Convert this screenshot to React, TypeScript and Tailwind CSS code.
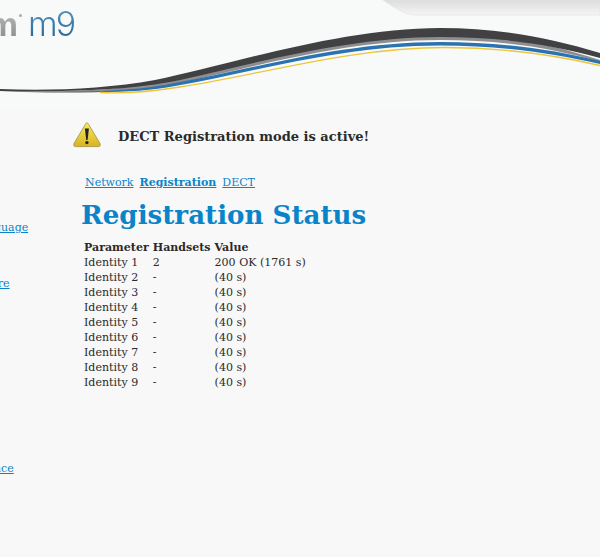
const rows = [
  { name: 'Identity 1', handsets: '2', value: '200 OK (1761 s)' },
  { name: 'Identity 2', handsets: '-', value: '(40 s)' },
  { name: 'Identity 3', handsets: '-', value: '(40 s)' },
  { name: 'Identity 4', handsets: '-', value: '(40 s)' },
  { name: 'Identity 5', handsets: '-', value: '(40 s)' },
  { name: 'Identity 6', handsets: '-', value: '(40 s)' },
  { name: 'Identity 7', handsets: '-', value: '(40 s)' },
  { name: 'Identity 8', handsets: '-', value: '(40 s)' },
  { name: 'Identity 9', handsets: '-', value: '(40 s)' },
]

function Wave() {
  return (
    <svg width="600" height="110" viewBox="0 0 600 110" className="block">
      <defs>
        <linearGradient id="tab" x1="0" y1="0" x2="0" y2="1">
          <stop offset="0" stopColor="#dcdcdc" />
          <stop offset="1" stopColor="#f5f5f5" />
        </linearGradient>
      </defs>
      <path d="M383 0 C395 8 405 15 416 15 L600 15 L600 0 Z" fill="url(#tab)" stroke="#e2e2e2" strokeWidth="0.7" />
      {/* gray shadow */}
      <path d="M0 90 C60 93 120 91 170 80 C240 66 340 33 440 33 C500 33 550 44 600 60 L600 62 C550 47 500 40 440 40 C340 40 240 71 170 85 C120 94 60 94 0 91 Z" fill="#8e8e90" />
      {/* dark band */}
      <path d="M0 89 C50 91 105 89 155 80 C225 66 340 28 440 28 C500 28 550 38 600 53 L600 58 C550 44 500 37 440 37 C340 37 235 69 170 82 C120 91 60 92 0 91 Z" fill="#414143" />
      {/* blue */}
      <path d="M60 91.5 C110 92 145 89 175 83 C250 70 340 42 440 42 C500 42 550 49 600 61 L600 64 C550 53 500 45.5 440 45.5 C340 45.5 250 73 175 86 C145 92 110 93 60 91.5 Z" fill="#2a72b0" />
      {/* yellow */}
      <path d="M100 92.5 C130 94 155 91 180 87 C260 75 350 47.5 445 47.5 C500 47.5 550 54 600 65.5" fill="none" stroke="#ecc638" strokeWidth="1.3" />
    </svg>
  )
}

function WarningIcon() {
  return (
    <svg width="28" height="26" viewBox="0 0 28 26" className="block">
      <defs>
        <linearGradient id="warn" x1="0" y1="0" x2="0" y2="1">
          <stop offset="0" stopColor="#f8ea62" />
          <stop offset="1" stopColor="#d8b420" />
        </linearGradient>
      </defs>
      <path d="M14 0.8 Q14.8 0.8 15.6 2.4 L27 21.5 Q28 24.6 25.5 24.6 L2.5 24.6 Q0 24.6 1 21.5 L12.4 2.4 Q13.2 0.8 14 0.8 Z" fill="url(#warn)" stroke="#a8964a" strokeWidth="0.9" />
      <path d="M11.9 6.5 L15.9 6.5 L14.6 18 L13.2 18 Z" fill="#222" />
      <circle cx="13.9" cy="20.6" r="1.7" fill="#222" />
    </svg>
  )
}

const SideLink = ({ label, className }: { label: string; className: string }) => (
  <a href="#" className={`block underline text-[#0a84c8] whitespace-nowrap ${className}`}>{label}</a>
)

export default function App() {
  return (
    <div className="h-[557px] w-[600px] overflow-hidden bg-[#f8f8f8] text-[#2a2a2a] text-[11px] leading-[15px] font-['DejaVu_Serif',serif]">
      <header className="relative h-[110px] bg-[#f8f9f9]">
        <Wave />
        <div className="absolute left-[-30px] top-[3px] flex items-start font-['Inter',sans-serif] text-[34px] leading-[42px]">
          <span className="w-[48px] text-right font-['Liberation_Sans',sans-serif] font-bold bg-gradient-to-b from-[#c4c4c4] to-[#858585] bg-clip-text text-transparent">m</span>
          <span className="mt-[11px] ml-[1px] h-[3px] w-[3px] rounded-full bg-[#aaaaaa]" />
          <span className="ml-[6px] font-light tracking-[-2px] bg-gradient-to-b from-[#5b9cc4] to-[#1f5f8e] bg-clip-text text-transparent">m9</span>
        </div>
      </header>
      <div className="flex">
        <nav className="w-[84px] shrink-0">
          <div className="-ml-[30px] pt-[110px]">
            <SideLink label="Language" className="ml-[3px]" />
            <SideLink label="Firmware" className="mt-[41px] ml-[-15px]" />
            <SideLink label="Maintenance" className="mt-[170px] ml-[-29px]" />
          </div>
        </nav>
        <main className="flex-1">
          <div className="-ml-[11px] flex h-[26px] items-center mt-[12px]">
            <WarningIcon />
            <p className="ml-[17px] mt-[2px] text-[13.03px] font-bold">DECT Registration mode is active!</p>
          </div>
          <div className="mt-[27px] flex gap-[6px] text-[#0a84c8]">
            <a href="#" className="underline ml-[1px]">Network</a>
            <a href="#" className="underline font-bold">Registration</a>
            <a href="#" className="underline">DECT</a>
          </div>
          <h1 className="-ml-[3px] mt-[7px] text-[26.15px] leading-[36px] font-bold text-[#0a84c8]">Registration Status</h1>
          <table className="mt-[7px] border-collapse text-[11.04px]">
            <thead>
              <tr className="font-bold text-left">
                <th className="pr-[4px]">Parameter</th>
                <th className="pr-[4px]">Handsets</th>
                <th>Value</th>
              </tr>
            </thead>
            <tbody>
              {rows.map((row) => (
                <tr key={row.name}>
                  <td>{row.name}</td>
                  <td>{row.handsets}</td>
                  <td>{row.value}</td>
                </tr>
              ))}
            </tbody>
          </table>
        </main>
      </div>
    </div>
  )
}
